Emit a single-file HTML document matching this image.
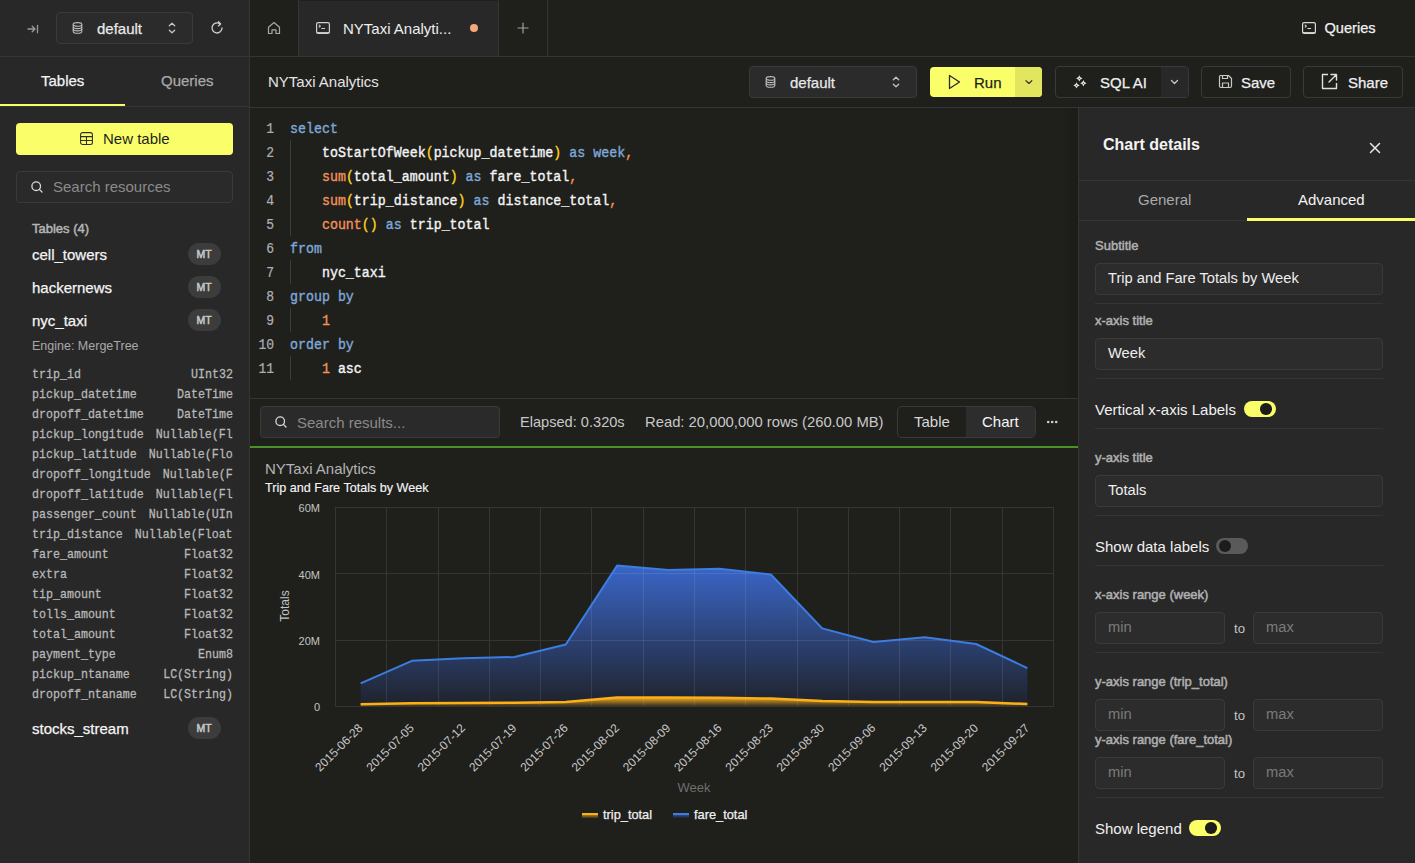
<!DOCTYPE html>
<html><head><meta charset="utf-8">
<style>
*{box-sizing:border-box;margin:0;padding:0}
html,body{width:1415px;height:863px;overflow:hidden;background:#1f1f1c;font-family:"Liberation Sans",sans-serif;color:#e6e6e6}
.abs{position:absolute}
svg{display:block}
.t{position:absolute;white-space:nowrap;line-height:1}
</style></head><body>
<div class="abs" style="left:0px;top:0px;width:249px;height:863px;background:#282828"></div>
<div class="abs" style="left:249px;top:0px;width:1px;height:863px;background:#353535"></div>
<div class="abs" style="left:0px;top:56px;width:249px;height:1px;background:#353535"></div>
<div class="abs" style="left:0px;top:106px;width:249px;height:1px;background:#353535"></div>
<div class="abs" style="left:0px;top:104px;width:125px;height:2px;background:#faff69"></div>
<svg class="abs" style="left:26.5px;top:23.5px;" width="12" height="10" viewBox="0 0 12 10"><path d="M1 5H8M5.2 2.2L8 5L5.2 7.8M10.5 1.3V8.7" stroke="#9a9a9a" stroke-width="1.3" fill="none" stroke-linecap="round" stroke-linejoin="round"/></svg>
<div class="abs" style="left:56px;top:12px;width:137px;height:32px;background:#2b2b2b;border:1px solid #3a3a3a;border-radius:4px"></div>
<svg class="abs" style="left:72px;top:22px;" width="11" height="12" viewBox="0 0 11 12"><g fill="none" stroke="#bdbdbd" stroke-width="1.1"><ellipse cx="5.5" cy="2.4" rx="4.3" ry="1.8"/><path d="M1.2 2.4V9.4C1.2 10.4 3.1 11.2 5.5 11.2S9.8 10.4 9.8 9.4V2.4"/><path d="M1.2 4.8C1.2 5.8 3.1 6.6 5.5 6.6S9.8 5.8 9.8 4.8M1.2 7.1C1.2 8.1 3.1 8.9 5.5 8.9S9.8 8.1 9.8 7.1"/></g></svg>
<div class="t" style="left:97px;top:21px;font-size:15px;color:#e8e8e8;font-weight:400;font-family:'Liberation Sans',sans-serif;-webkit-text-stroke:0.25px #e8e8e8;">default</div>
<svg class="abs" style="left:168px;top:22px;" width="8" height="12" viewBox="0 0 8 12"><path d="M1.3 3.8L4 1.2L6.7 3.8M1.3 8.2L4 10.8L6.7 8.2" stroke="#c8c8c8" stroke-width="1.2" fill="none" stroke-linecap="round" stroke-linejoin="round"/></svg>
<svg class="abs" style="left:210px;top:21px;" width="14" height="14" viewBox="0 0 14 14"><path d="M12 7A5 5 0 1 1 9.6 2.7" stroke="#d0d0d0" stroke-width="1.3" fill="none" stroke-linecap="round"/><path d="M8.5 0.8L10.6 2.9L8.4 4.9" stroke="#d0d0d0" stroke-width="1.3" fill="none" stroke-linecap="round" stroke-linejoin="round"/></svg>
<div class="t" style="left:41px;top:73px;font-size:15px;color:#f2f2f2;font-weight:400;font-family:'Liberation Sans',sans-serif;-webkit-text-stroke:0.25px #f2f2f2;">Tables</div>
<div class="t" style="left:161px;top:73px;font-size:15px;color:#a8a8a8;font-weight:400;font-family:'Liberation Sans',sans-serif;-webkit-text-stroke:0.25px #a8a8a8;">Queries</div>
<div class="abs" style="left:16px;top:123px;width:217px;height:32px;background:#faff69;border-radius:4px"></div>
<svg class="abs" style="left:80px;top:132px;" width="13" height="13" viewBox="0 0 13 13"><g fill="none" stroke="#2e2e22" stroke-width="1.05"><rect x="0.6" y="0.6" width="11.8" height="11.8" rx="2"/><path d="M0.6 4.6H12.4M0.6 8.5H12.4M6.5 4.6V12.4"/></g></svg>
<div class="t" style="left:103px;top:131px;font-size:15px;color:#1f1f1c;font-weight:400;font-family:'Liberation Sans',sans-serif;">New table</div>
<div class="abs" style="left:16px;top:171px;width:217px;height:32px;background:#2a2a2a;border:1px solid #3a3a3a;border-radius:4px"></div>
<svg class="abs" style="left:31px;top:181px;" width="12" height="12" viewBox="0 0 12 12"><circle cx="5.2" cy="5.2" r="4.3" stroke="#d8d8d8" stroke-width="1.3" fill="none"/><path d="M8.4 8.4L11 11" stroke="#d8d8d8" stroke-width="1.3" stroke-linecap="round"/></svg>
<div class="t" style="left:53px;top:179px;font-size:15px;color:#8a8a8a;font-weight:400;font-family:'Liberation Sans',sans-serif;">Search resources</div>
<div class="t" style="left:32px;top:221.5px;font-size:13px;color:#b4b4b4;font-weight:400;font-family:'Liberation Sans',sans-serif;-webkit-text-stroke:0.5px #b4b4b4;">Tables (4)</div>
<div class="t" style="left:32px;top:247px;font-size:15px;color:#f4f4f4;font-weight:400;font-family:'Liberation Sans',sans-serif;-webkit-text-stroke:0.25px #f4f4f4;">cell_towers</div>
<div class="abs" style="left:188px;top:243px;width:33px;height:22px;background:#3c3c3c;border-radius:11px"></div>
<div class="t" style="left:196.5px;top:249px;font-size:10.5px;color:#c8c8c8;font-weight:400;font-family:'Liberation Sans',sans-serif;-webkit-text-stroke:0.5px #c8c8c8;">MT</div>
<div class="t" style="left:32px;top:280px;font-size:15px;color:#f4f4f4;font-weight:400;font-family:'Liberation Sans',sans-serif;-webkit-text-stroke:0.25px #f4f4f4;">hackernews</div>
<div class="abs" style="left:188px;top:276px;width:33px;height:22px;background:#3c3c3c;border-radius:11px"></div>
<div class="t" style="left:196.5px;top:282px;font-size:10.5px;color:#c8c8c8;font-weight:400;font-family:'Liberation Sans',sans-serif;-webkit-text-stroke:0.5px #c8c8c8;">MT</div>
<div class="t" style="left:32px;top:313px;font-size:15px;color:#f4f4f4;font-weight:400;font-family:'Liberation Sans',sans-serif;-webkit-text-stroke:0.25px #f4f4f4;">nyc_taxi</div>
<div class="abs" style="left:188px;top:309px;width:33px;height:22px;background:#3c3c3c;border-radius:11px"></div>
<div class="t" style="left:196.5px;top:315px;font-size:10.5px;color:#c8c8c8;font-weight:400;font-family:'Liberation Sans',sans-serif;-webkit-text-stroke:0.5px #c8c8c8;">MT</div>
<div class="t" style="left:32px;top:340px;font-size:12.5px;color:#a8a8a8;font-weight:400;font-family:'Liberation Sans',sans-serif;">Engine: MergeTree</div>
<div class="abs" style="left:32px;top:366px;width:201px;height:16px;display:flex;font-family:'Liberation Mono',monospace;font-size:11.65px;line-height:16px;color:#b8b8b8;white-space:nowrap;transform:scaleY(1.17);-webkit-text-stroke:0.25px #b8b8b8"><span style="flex:none">trip_id</span><span style="flex:1;margin-left:12px;overflow:hidden;text-align:right">UInt32</span></div>
<div class="abs" style="left:32px;top:386px;width:201px;height:16px;display:flex;font-family:'Liberation Mono',monospace;font-size:11.65px;line-height:16px;color:#b8b8b8;white-space:nowrap;transform:scaleY(1.17);-webkit-text-stroke:0.25px #b8b8b8"><span style="flex:none">pickup_datetime</span><span style="flex:1;margin-left:12px;overflow:hidden;text-align:right">DateTime</span></div>
<div class="abs" style="left:32px;top:406px;width:201px;height:16px;display:flex;font-family:'Liberation Mono',monospace;font-size:11.65px;line-height:16px;color:#b8b8b8;white-space:nowrap;transform:scaleY(1.17);-webkit-text-stroke:0.25px #b8b8b8"><span style="flex:none">dropoff_datetime</span><span style="flex:1;margin-left:12px;overflow:hidden;text-align:right">DateTime</span></div>
<div class="abs" style="left:32px;top:426px;width:201px;height:16px;display:flex;font-family:'Liberation Mono',monospace;font-size:11.65px;line-height:16px;color:#b8b8b8;white-space:nowrap;transform:scaleY(1.17);-webkit-text-stroke:0.25px #b8b8b8"><span style="flex:none">pickup_longitude</span><span style="flex:1;margin-left:12px;overflow:hidden;text-align:right">Nullable(Float64)</span></div>
<div class="abs" style="left:32px;top:446px;width:201px;height:16px;display:flex;font-family:'Liberation Mono',monospace;font-size:11.65px;line-height:16px;color:#b8b8b8;white-space:nowrap;transform:scaleY(1.17);-webkit-text-stroke:0.25px #b8b8b8"><span style="flex:none">pickup_latitude</span><span style="flex:1;margin-left:12px;overflow:hidden;text-align:right">Nullable(Float64)</span></div>
<div class="abs" style="left:32px;top:466px;width:201px;height:16px;display:flex;font-family:'Liberation Mono',monospace;font-size:11.65px;line-height:16px;color:#b8b8b8;white-space:nowrap;transform:scaleY(1.17);-webkit-text-stroke:0.25px #b8b8b8"><span style="flex:none">dropoff_longitude</span><span style="flex:1;margin-left:12px;overflow:hidden;text-align:right">Nullable(Float64)</span></div>
<div class="abs" style="left:32px;top:486px;width:201px;height:16px;display:flex;font-family:'Liberation Mono',monospace;font-size:11.65px;line-height:16px;color:#b8b8b8;white-space:nowrap;transform:scaleY(1.17);-webkit-text-stroke:0.25px #b8b8b8"><span style="flex:none">dropoff_latitude</span><span style="flex:1;margin-left:12px;overflow:hidden;text-align:right">Nullable(Float64)</span></div>
<div class="abs" style="left:32px;top:506px;width:201px;height:16px;display:flex;font-family:'Liberation Mono',monospace;font-size:11.65px;line-height:16px;color:#b8b8b8;white-space:nowrap;transform:scaleY(1.17);-webkit-text-stroke:0.25px #b8b8b8"><span style="flex:none">passenger_count</span><span style="flex:1;margin-left:12px;overflow:hidden;text-align:right">Nullable(UInt8)</span></div>
<div class="abs" style="left:32px;top:526px;width:201px;height:16px;display:flex;font-family:'Liberation Mono',monospace;font-size:11.65px;line-height:16px;color:#b8b8b8;white-space:nowrap;transform:scaleY(1.17);-webkit-text-stroke:0.25px #b8b8b8"><span style="flex:none">trip_distance</span><span style="flex:1;margin-left:12px;overflow:hidden;text-align:right">Nullable(Float32)</span></div>
<div class="abs" style="left:32px;top:546px;width:201px;height:16px;display:flex;font-family:'Liberation Mono',monospace;font-size:11.65px;line-height:16px;color:#b8b8b8;white-space:nowrap;transform:scaleY(1.17);-webkit-text-stroke:0.25px #b8b8b8"><span style="flex:none">fare_amount</span><span style="flex:1;margin-left:12px;overflow:hidden;text-align:right">Float32</span></div>
<div class="abs" style="left:32px;top:566px;width:201px;height:16px;display:flex;font-family:'Liberation Mono',monospace;font-size:11.65px;line-height:16px;color:#b8b8b8;white-space:nowrap;transform:scaleY(1.17);-webkit-text-stroke:0.25px #b8b8b8"><span style="flex:none">extra</span><span style="flex:1;margin-left:12px;overflow:hidden;text-align:right">Float32</span></div>
<div class="abs" style="left:32px;top:586px;width:201px;height:16px;display:flex;font-family:'Liberation Mono',monospace;font-size:11.65px;line-height:16px;color:#b8b8b8;white-space:nowrap;transform:scaleY(1.17);-webkit-text-stroke:0.25px #b8b8b8"><span style="flex:none">tip_amount</span><span style="flex:1;margin-left:12px;overflow:hidden;text-align:right">Float32</span></div>
<div class="abs" style="left:32px;top:606px;width:201px;height:16px;display:flex;font-family:'Liberation Mono',monospace;font-size:11.65px;line-height:16px;color:#b8b8b8;white-space:nowrap;transform:scaleY(1.17);-webkit-text-stroke:0.25px #b8b8b8"><span style="flex:none">tolls_amount</span><span style="flex:1;margin-left:12px;overflow:hidden;text-align:right">Float32</span></div>
<div class="abs" style="left:32px;top:626px;width:201px;height:16px;display:flex;font-family:'Liberation Mono',monospace;font-size:11.65px;line-height:16px;color:#b8b8b8;white-space:nowrap;transform:scaleY(1.17);-webkit-text-stroke:0.25px #b8b8b8"><span style="flex:none">total_amount</span><span style="flex:1;margin-left:12px;overflow:hidden;text-align:right">Float32</span></div>
<div class="abs" style="left:32px;top:646px;width:201px;height:16px;display:flex;font-family:'Liberation Mono',monospace;font-size:11.65px;line-height:16px;color:#b8b8b8;white-space:nowrap;transform:scaleY(1.17);-webkit-text-stroke:0.25px #b8b8b8"><span style="flex:none">payment_type</span><span style="flex:1;margin-left:12px;overflow:hidden;text-align:right">Enum8</span></div>
<div class="abs" style="left:32px;top:666px;width:201px;height:16px;display:flex;font-family:'Liberation Mono',monospace;font-size:11.65px;line-height:16px;color:#b8b8b8;white-space:nowrap;transform:scaleY(1.17);-webkit-text-stroke:0.25px #b8b8b8"><span style="flex:none">pickup_ntaname</span><span style="flex:1;margin-left:12px;overflow:hidden;text-align:right">LC(String)</span></div>
<div class="abs" style="left:32px;top:686px;width:201px;height:16px;display:flex;font-family:'Liberation Mono',monospace;font-size:11.65px;line-height:16px;color:#b8b8b8;white-space:nowrap;transform:scaleY(1.17);-webkit-text-stroke:0.25px #b8b8b8"><span style="flex:none">dropoff_ntaname</span><span style="flex:1;margin-left:12px;overflow:hidden;text-align:right">LC(String)</span></div>
<div class="t" style="left:32px;top:721px;font-size:15px;color:#f4f4f4;font-weight:400;font-family:'Liberation Sans',sans-serif;-webkit-text-stroke:0.25px #f4f4f4;">stocks_stream</div>
<div class="abs" style="left:188px;top:717px;width:33px;height:22px;background:#3c3c3c;border-radius:11px"></div>
<div class="t" style="left:196.5px;top:723px;font-size:10.5px;color:#c8c8c8;font-weight:400;font-family:'Liberation Sans',sans-serif;-webkit-text-stroke:0.5px #c8c8c8;">MT</div>
<div class="abs" style="left:250px;top:56px;width:1165px;height:1px;background:#353535"></div>
<div class="abs" style="left:298px;top:0px;width:1px;height:56px;background:#353535"></div>
<div class="abs" style="left:299px;top:1px;width:199px;height:55px;background:#282828"></div>
<div class="abs" style="left:498px;top:0px;width:1px;height:56px;background:#353535"></div>
<div class="abs" style="left:547px;top:0px;width:1px;height:56px;background:#353535"></div>
<svg class="abs" style="left:267px;top:21px;" width="14" height="14" viewBox="0 0 14 14"><path d="M1.5 6.2L7 1.5L12.5 6.2V12.5H9V8.8H5V12.5H1.5Z" stroke="#a8a8a8" stroke-width="1.2" fill="none" stroke-linejoin="round"/></svg>
<svg class="abs" style="left:316px;top:22px;" width="14" height="12" viewBox="0 0 14 12"><rect x="0.6" y="0.6" width="12.8" height="10.8" rx="1.5" stroke="#d0d0d0" stroke-width="1.2" fill="none"/><path d="M1 10.6H13" stroke="#d0d0d0" stroke-width="1" fill="none"/><path d="M3.2 3.2L4.4 4.2L3.2 5.2M5.8 6.5H8.6" stroke="#d0d0d0" stroke-width="1.1" fill="none" stroke-linecap="round" stroke-linejoin="round"/></svg>
<div class="t" style="left:343px;top:21px;font-size:15px;color:#eeeeee;font-weight:400;font-family:'Liberation Sans',sans-serif;">NYTaxi Analyti...</div>
<div class="abs" style="left:470px;top:24px;width:8.3px;height:8.3px;border-radius:50%;background:#f5a97a"></div>
<svg class="abs" style="left:517px;top:22px;" width="12" height="12" viewBox="0 0 12 12"><path d="M6 1V11M1 6H11" stroke="#a0a0a0" stroke-width="1.2" stroke-linecap="round"/></svg>
<svg class="abs" style="left:1302px;top:22px;" width="14" height="12" viewBox="0 0 14 12"><rect x="0.6" y="0.6" width="12.8" height="10.8" rx="1.5" stroke="#d8d8d8" stroke-width="1.2" fill="none"/><path d="M1 10.6H13" stroke="#d8d8d8" stroke-width="1" fill="none"/><path d="M3.2 3.2L4.4 4.2L3.2 5.2M5.8 6.5H8.6" stroke="#d8d8d8" stroke-width="1.1" fill="none" stroke-linecap="round" stroke-linejoin="round"/></svg>
<div class="t" style="left:1324.5px;top:21px;font-size:14.6px;color:#f0f0f0;font-weight:400;font-family:'Liberation Sans',sans-serif;-webkit-text-stroke:0.25px #f0f0f0;">Queries</div>
<div class="abs" style="left:250px;top:107px;width:1165px;height:1px;background:#353535"></div>
<div class="t" style="left:268px;top:74px;font-size:15px;color:#e4e4e4;font-weight:400;font-family:'Liberation Sans',sans-serif;">NYTaxi Analytics</div>
<div class="abs" style="left:749px;top:66px;width:168px;height:32px;background:#2b2b2b;border:1px solid #3a3a3a;border-radius:4px"></div>
<svg class="abs" style="left:765px;top:76px;" width="11" height="12" viewBox="0 0 11 12"><g fill="none" stroke="#bdbdbd" stroke-width="1.1"><ellipse cx="5.5" cy="2.4" rx="4.3" ry="1.8"/><path d="M1.2 2.4V9.4C1.2 10.4 3.1 11.2 5.5 11.2S9.8 10.4 9.8 9.4V2.4"/><path d="M1.2 4.8C1.2 5.8 3.1 6.6 5.5 6.6S9.8 5.8 9.8 4.8M1.2 7.1C1.2 8.1 3.1 8.9 5.5 8.9S9.8 8.1 9.8 7.1"/></g></svg>
<div class="t" style="left:790px;top:75px;font-size:15px;color:#e8e8e8;font-weight:400;font-family:'Liberation Sans',sans-serif;-webkit-text-stroke:0.25px #e8e8e8;">default</div>
<svg class="abs" style="left:892px;top:76px;" width="8" height="12" viewBox="0 0 8 12"><path d="M1.3 3.8L4 1.2L6.7 3.8M1.3 8.2L4 10.8L6.7 8.2" stroke="#c8c8c8" stroke-width="1.2" fill="none" stroke-linecap="round" stroke-linejoin="round"/></svg>
<div class="abs" style="left:930px;top:67px;width:112px;height:30px;background:#faff69;border-radius:4px;overflow:hidden"></div>
<div class="abs" style="left:1015px;top:67px;width:27px;height:30px;background:#e2e65e;border-radius:0 4px 4px 0"></div>
<svg class="abs" style="left:948px;top:74px;" width="13" height="16" viewBox="0 0 13 16"><path d="M1.5 1.5L11.5 8L1.5 14.5Z" stroke="#2a2a2a" stroke-width="1.3" fill="none" stroke-linejoin="round"/></svg>
<div class="t" style="left:974px;top:75px;font-size:15px;color:#1f1f1c;font-weight:400;font-family:'Liberation Sans',sans-serif;-webkit-text-stroke:0.25px #1f1f1c;">Run</div>
<svg class="abs" style="left:1024px;top:79px;" width="9" height="6" viewBox="0 0 9 6"><path d="M2 1.8L4.9 4.4L7.8 1.8" stroke="#3a3a2a" stroke-width="1.3" fill="none" stroke-linecap="round" stroke-linejoin="round"/></svg>
<div class="abs" style="left:1055px;top:66px;width:134px;height:32px;border:1px solid #3a3a3a;border-radius:4px"></div>
<div class="abs" style="left:1161px;top:67px;width:27px;height:30px;background:#282828;border-radius:0 3px 3px 0"></div>
<svg class="abs" style="left:1070px;top:72px;" width="18" height="18" viewBox="0 0 18 18"><path d="M9.3 3.2Q9.9 5.800000000000001 12.5 6.4Q9.9 7.0 9.3 9.600000000000001Q8.700000000000001 7.0 6.1000000000000005 6.4Q8.700000000000001 5.800000000000001 9.3 3.2Z" fill="#e0e0e0"/><circle cx="9.3" cy="6.4" r="0.5" fill="#1f1f1c"/><path d="M13.4 7.999999999999999Q14.0 10.6 16.6 11.2Q14.0 11.799999999999999 13.4 14.399999999999999Q12.8 11.799999999999999 10.2 11.2Q12.8 10.6 13.4 7.999999999999999Z" fill="#e0e0e0"/><circle cx="13.4" cy="11.2" r="0.5" fill="#1f1f1c"/><path d="M6.5 10.2Q7.1 12.8 9.7 13.4Q7.1 14.0 6.5 16.6Q5.9 14.0 3.3 13.4Q5.9 12.8 6.5 10.2Z" fill="#e0e0e0"/><circle cx="6.5" cy="13.4" r="0.5" fill="#1f1f1c"/></svg>
<div class="t" style="left:1100px;top:75px;font-size:15px;color:#f0f0f0;font-weight:400;font-family:'Liberation Sans',sans-serif;-webkit-text-stroke:0.25px #f0f0f0;">SQL AI</div>
<svg class="abs" style="left:1170px;top:79px;" width="9" height="6" viewBox="0 0 9 6"><path d="M1.5 1.5L4.5 4.5L7.5 1.5" stroke="#c8c8c8" stroke-width="1.3" fill="none" stroke-linecap="round" stroke-linejoin="round"/></svg>
<div class="abs" style="left:1201px;top:66px;width:90px;height:32px;border:1px solid #3a3a3a;border-radius:4px"></div>
<svg class="abs" style="left:1218px;top:74px;" width="15" height="15" viewBox="0 0 15 15"><path d="M2.5 1.5H10.5L13.5 4.5V12C13.5 12.8 12.8 13.5 12 13.5H3C2.2 13.5 1.5 12.8 1.5 12V2.5C1.5 2 2 1.5 2.5 1.5Z" stroke="#c8c8c8" stroke-width="1.2" fill="none" stroke-linejoin="round"/><path d="M4.5 1.5V4.5H9.5V1.5M4.5 13.5V9H10.5V13.5" stroke="#c8c8c8" stroke-width="1.2" fill="none" stroke-linejoin="round"/></svg>
<div class="t" style="left:1241px;top:75px;font-size:15px;color:#f0f0f0;font-weight:400;font-family:'Liberation Sans',sans-serif;-webkit-text-stroke:0.25px #f0f0f0;">Save</div>
<div class="abs" style="left:1303px;top:66px;width:100px;height:32px;border:1px solid #3a3a3a;border-radius:4px"></div>
<svg class="abs" style="left:1321px;top:73px;" width="17" height="17" viewBox="0 0 17 17"><path d="M7 1.5H1.5V15.5H15.5V10" stroke="#e0e0e0" stroke-width="1.4" fill="none" stroke-linejoin="round"/><path d="M10 1.5H15.5V7M15.5 1.5L8 9" stroke="#e0e0e0" stroke-width="1.4" fill="none" stroke-linecap="round" stroke-linejoin="round"/></svg>
<div class="t" style="left:1348px;top:75px;font-size:15px;color:#f0f0f0;font-weight:400;font-family:'Liberation Sans',sans-serif;-webkit-text-stroke:0.25px #f0f0f0;">Share</div>
<div class="t" style="left:250px;width:24px;text-align:right;top:121.5px;font-family:'Liberation Mono',monospace;font-size:13px;line-height:16px;color:#b0b0b0;transform:scaleY(1.15);-webkit-text-stroke:0.2px #b0b0b0">1</div>
<div class="t" style="left:290px;top:121.5px;font-family:'Liberation Mono',monospace;font-size:13.3px;line-height:16px;transform:scaleY(1.13);transform-origin:0 50%;-webkit-text-stroke:0.35px currentColor"><span style="color:#7fa8d6">select</span></div>
<div class="t" style="left:250px;width:24px;text-align:right;top:145.5px;font-family:'Liberation Mono',monospace;font-size:13px;line-height:16px;color:#b0b0b0;transform:scaleY(1.15);-webkit-text-stroke:0.2px #b0b0b0">2</div>
<div class="t" style="left:290px;top:145.5px;font-family:'Liberation Mono',monospace;font-size:13.3px;line-height:16px;transform:scaleY(1.13);transform-origin:0 50%;-webkit-text-stroke:0.35px currentColor"><span style="color:#f4f4f4">&nbsp;&nbsp;&nbsp;&nbsp;</span><span style="color:#f4f4f4">toStartOfWeek</span><span style="color:#f9d423">(</span><span style="color:#f4f4f4">pickup_datetime</span><span style="color:#f9d423">)</span><span style="color:#7fa8d6">&nbsp;as&nbsp;</span><span style="color:#7fa8d6">week</span><span style="color:#f0925a">,</span></div>
<div class="t" style="left:250px;width:24px;text-align:right;top:169.5px;font-family:'Liberation Mono',monospace;font-size:13px;line-height:16px;color:#b0b0b0;transform:scaleY(1.15);-webkit-text-stroke:0.2px #b0b0b0">3</div>
<div class="t" style="left:290px;top:169.5px;font-family:'Liberation Mono',monospace;font-size:13.3px;line-height:16px;transform:scaleY(1.13);transform-origin:0 50%;-webkit-text-stroke:0.35px currentColor"><span style="color:#f4f4f4">&nbsp;&nbsp;&nbsp;&nbsp;</span><span style="color:#f0925a">sum</span><span style="color:#f9d423">(</span><span style="color:#f4f4f4">total_amount</span><span style="color:#f9d423">)</span><span style="color:#7fa8d6">&nbsp;as&nbsp;</span><span style="color:#f4f4f4">fare_total</span><span style="color:#f0925a">,</span></div>
<div class="t" style="left:250px;width:24px;text-align:right;top:193.5px;font-family:'Liberation Mono',monospace;font-size:13px;line-height:16px;color:#b0b0b0;transform:scaleY(1.15);-webkit-text-stroke:0.2px #b0b0b0">4</div>
<div class="t" style="left:290px;top:193.5px;font-family:'Liberation Mono',monospace;font-size:13.3px;line-height:16px;transform:scaleY(1.13);transform-origin:0 50%;-webkit-text-stroke:0.35px currentColor"><span style="color:#f4f4f4">&nbsp;&nbsp;&nbsp;&nbsp;</span><span style="color:#f0925a">sum</span><span style="color:#f9d423">(</span><span style="color:#f4f4f4">trip_distance</span><span style="color:#f9d423">)</span><span style="color:#7fa8d6">&nbsp;as&nbsp;</span><span style="color:#f4f4f4">distance_total</span><span style="color:#f0925a">,</span></div>
<div class="t" style="left:250px;width:24px;text-align:right;top:217.5px;font-family:'Liberation Mono',monospace;font-size:13px;line-height:16px;color:#b0b0b0;transform:scaleY(1.15);-webkit-text-stroke:0.2px #b0b0b0">5</div>
<div class="t" style="left:290px;top:217.5px;font-family:'Liberation Mono',monospace;font-size:13.3px;line-height:16px;transform:scaleY(1.13);transform-origin:0 50%;-webkit-text-stroke:0.35px currentColor"><span style="color:#f4f4f4">&nbsp;&nbsp;&nbsp;&nbsp;</span><span style="color:#f0925a">count</span><span style="color:#f9d423">()</span><span style="color:#7fa8d6">&nbsp;as&nbsp;</span><span style="color:#f4f4f4">trip_total</span></div>
<div class="t" style="left:250px;width:24px;text-align:right;top:241.5px;font-family:'Liberation Mono',monospace;font-size:13px;line-height:16px;color:#b0b0b0;transform:scaleY(1.15);-webkit-text-stroke:0.2px #b0b0b0">6</div>
<div class="t" style="left:290px;top:241.5px;font-family:'Liberation Mono',monospace;font-size:13.3px;line-height:16px;transform:scaleY(1.13);transform-origin:0 50%;-webkit-text-stroke:0.35px currentColor"><span style="color:#7fa8d6">from</span></div>
<div class="t" style="left:250px;width:24px;text-align:right;top:265.5px;font-family:'Liberation Mono',monospace;font-size:13px;line-height:16px;color:#b0b0b0;transform:scaleY(1.15);-webkit-text-stroke:0.2px #b0b0b0">7</div>
<div class="t" style="left:290px;top:265.5px;font-family:'Liberation Mono',monospace;font-size:13.3px;line-height:16px;transform:scaleY(1.13);transform-origin:0 50%;-webkit-text-stroke:0.35px currentColor"><span style="color:#f4f4f4">&nbsp;&nbsp;&nbsp;&nbsp;</span><span style="color:#f4f4f4">nyc_taxi</span></div>
<div class="t" style="left:250px;width:24px;text-align:right;top:289.5px;font-family:'Liberation Mono',monospace;font-size:13px;line-height:16px;color:#b0b0b0;transform:scaleY(1.15);-webkit-text-stroke:0.2px #b0b0b0">8</div>
<div class="t" style="left:290px;top:289.5px;font-family:'Liberation Mono',monospace;font-size:13.3px;line-height:16px;transform:scaleY(1.13);transform-origin:0 50%;-webkit-text-stroke:0.35px currentColor"><span style="color:#7fa8d6">group&nbsp;by</span></div>
<div class="t" style="left:250px;width:24px;text-align:right;top:313.5px;font-family:'Liberation Mono',monospace;font-size:13px;line-height:16px;color:#b0b0b0;transform:scaleY(1.15);-webkit-text-stroke:0.2px #b0b0b0">9</div>
<div class="t" style="left:290px;top:313.5px;font-family:'Liberation Mono',monospace;font-size:13.3px;line-height:16px;transform:scaleY(1.13);transform-origin:0 50%;-webkit-text-stroke:0.35px currentColor"><span style="color:#f4f4f4">&nbsp;&nbsp;&nbsp;&nbsp;</span><span style="color:#f0925a">1</span></div>
<div class="t" style="left:250px;width:24px;text-align:right;top:337.5px;font-family:'Liberation Mono',monospace;font-size:13px;line-height:16px;color:#b0b0b0;transform:scaleY(1.15);-webkit-text-stroke:0.2px #b0b0b0">10</div>
<div class="t" style="left:290px;top:337.5px;font-family:'Liberation Mono',monospace;font-size:13.3px;line-height:16px;transform:scaleY(1.13);transform-origin:0 50%;-webkit-text-stroke:0.35px currentColor"><span style="color:#7fa8d6">order&nbsp;by</span></div>
<div class="t" style="left:250px;width:24px;text-align:right;top:361.5px;font-family:'Liberation Mono',monospace;font-size:13px;line-height:16px;color:#b0b0b0;transform:scaleY(1.15);-webkit-text-stroke:0.2px #b0b0b0">11</div>
<div class="t" style="left:290px;top:361.5px;font-family:'Liberation Mono',monospace;font-size:13.3px;line-height:16px;transform:scaleY(1.13);transform-origin:0 50%;-webkit-text-stroke:0.35px currentColor"><span style="color:#f4f4f4">&nbsp;&nbsp;&nbsp;&nbsp;</span><span style="color:#f0925a">1</span><span style="color:#f4f4f4">&nbsp;asc</span></div>
<div class="abs" style="left:290px;top:140px;width:1px;height:0px;"></div>
<div class="abs" style="left:290px;top:260px;width:1px;height:0px;"></div>
<div class="abs" style="left:290px;top:308px;width:1px;height:0px;"></div>
<div class="abs" style="left:290px;top:356px;width:1px;height:0px;"></div>
<div class="abs" style="left:290px;top:140px;width:1px;height:96px;background:#3c3c3c"></div>
<div class="abs" style="left:290px;top:260px;width:1px;height:24px;background:#3c3c3c"></div>
<div class="abs" style="left:290px;top:308px;width:1px;height:24px;background:#3c3c3c"></div>
<div class="abs" style="left:290px;top:356px;width:1px;height:24px;background:#3c3c3c"></div>
<div class="abs" style="left:250px;top:398px;width:828px;height:1px;background:#353535"></div>
<div class="abs" style="left:260px;top:406px;width:240px;height:32px;background:#2a2a2a;border:1px solid #3a3a3a;border-radius:4px"></div>
<svg class="abs" style="left:275px;top:416px;" width="12" height="12" viewBox="0 0 12 12"><circle cx="5.2" cy="5.2" r="4.3" stroke="#d8d8d8" stroke-width="1.3" fill="none"/><path d="M8.4 8.4L11 11" stroke="#d8d8d8" stroke-width="1.3" stroke-linecap="round"/></svg>
<div class="t" style="left:297px;top:415px;font-size:15px;color:#8a8a8a;font-weight:400;font-family:'Liberation Sans',sans-serif;">Search results...</div>
<div class="t" style="left:520px;top:415px;font-size:14.6px;color:#c8c8c8;font-weight:400;font-family:'Liberation Sans',sans-serif;">Elapsed: 0.320s</div>
<div class="t" style="left:645px;top:415px;font-size:14.8px;color:#c8c8c8;font-weight:400;font-family:'Liberation Sans',sans-serif;">Read: 20,000,000 rows (260.00 MB)</div>
<div class="abs" style="left:897px;top:406px;width:139px;height:32px;border:1px solid #3a3a3a;border-radius:5px"></div>
<div class="abs" style="left:966px;top:407px;width:69px;height:30px;background:#2d2d2d;border-radius:0 4px 4px 0"></div>
<div class="t" style="left:914px;top:414px;font-size:15px;color:#d8d8d8;font-weight:400;font-family:'Liberation Sans',sans-serif;">Table</div>
<div class="t" style="left:982px;top:414px;font-size:15px;color:#f6f6f6;font-weight:400;font-family:'Liberation Sans',sans-serif;">Chart</div>
<svg class="abs" style="left:1046px;top:420px;" width="12" height="4" viewBox="0 0 12 4"><circle cx="2.2" cy="2" r="1.3" fill="#d0d0d0"/><circle cx="6.2" cy="2" r="1.3" fill="#d0d0d0"/><circle cx="10.2" cy="2" r="1.3" fill="#d0d0d0"/></svg>
<div class="abs" style="left:250px;top:446px;width:828px;height:2px;background:#4a9328"></div>
<div class="t" style="left:265px;top:461px;font-size:15px;color:#b4b4b4;font-weight:400;font-family:'Liberation Sans',sans-serif;">NYTaxi Analytics</div>
<div class="t" style="left:265px;top:482px;font-size:12.6px;color:#f4f4f4;font-weight:400;font-family:'Liberation Sans',sans-serif;-webkit-text-stroke:0.25px #f4f4f4;-webkit-text-stroke:0.15px #f4f4f4">Trip and Fare Totals by Week</div>
<svg class="abs" style="left:0;top:0;font-family:'Liberation Sans',sans-serif" width="1415" height="863"><defs><linearGradient id="gb" x1="0" y1="0" x2="0" y2="1"><stop offset="0" stop-color="#3a66c8"/><stop offset="1" stop-color="#1f222a"/></linearGradient><linearGradient id="go" x1="0" y1="0" x2="0" y2="1"><stop offset="0" stop-color="#f0a820"/><stop offset="1" stop-color="#3a3220"/></linearGradient></defs><line x1="335.5" y1="507" x2="335.5" y2="706" stroke="#353533" stroke-width="1"/><line x1="386.5" y1="507" x2="386.5" y2="706" stroke="#353533" stroke-width="1"/><line x1="438.5" y1="507" x2="438.5" y2="706" stroke="#353533" stroke-width="1"/><line x1="489.5" y1="507" x2="489.5" y2="706" stroke="#353533" stroke-width="1"/><line x1="540.5" y1="507" x2="540.5" y2="706" stroke="#353533" stroke-width="1"/><line x1="591.5" y1="507" x2="591.5" y2="706" stroke="#353533" stroke-width="1"/><line x1="643.5" y1="507" x2="643.5" y2="706" stroke="#353533" stroke-width="1"/><line x1="694.5" y1="507" x2="694.5" y2="706" stroke="#353533" stroke-width="1"/><line x1="745.5" y1="507" x2="745.5" y2="706" stroke="#353533" stroke-width="1"/><line x1="797.5" y1="507" x2="797.5" y2="706" stroke="#353533" stroke-width="1"/><line x1="848.5" y1="507" x2="848.5" y2="706" stroke="#353533" stroke-width="1"/><line x1="899.5" y1="507" x2="899.5" y2="706" stroke="#353533" stroke-width="1"/><line x1="950.5" y1="507" x2="950.5" y2="706" stroke="#353533" stroke-width="1"/><line x1="1002.5" y1="507" x2="1002.5" y2="706" stroke="#353533" stroke-width="1"/><line x1="1053.5" y1="507" x2="1053.5" y2="706" stroke="#353533" stroke-width="1"/><line x1="335" y1="507.5" x2="1054" y2="507.5" stroke="#353533" stroke-width="1"/><line x1="335" y1="573.5" x2="1054" y2="573.5" stroke="#353533" stroke-width="1"/><line x1="335" y1="640.5" x2="1054" y2="640.5" stroke="#353533" stroke-width="1"/><line x1="335" y1="706.5" x2="1054" y2="706.5" stroke="#353533" stroke-width="1"/><polygon points="360.6,706 360.6,683.3 411.9,660.8 463.2,658.2 514.5,657.0 565.8,644.5 617.1,565.6 668.4,570.0 719.6,568.8 770.9,574.5 822.2,628.4 873.5,642.0 924.8,637.3 976.1,644.0 1027.4,668.1 1027.4,706" fill="url(#gb)"/><polygon points="360.6,706 360.6,704.3 411.9,703.3 463.2,702.9 514.5,702.7 565.8,702.1 617.1,697.6 668.4,697.6 719.6,697.8 770.9,698.5 822.2,701.0 873.5,702.0 924.8,702.0 976.1,702.0 1027.4,704.0 1027.4,706" fill="url(#go)"/><clipPath id="cb"><polygon points="360.6,706 360.6,683.3 411.9,660.8 463.2,658.2 514.5,657.0 565.8,644.5 617.1,565.6 668.4,570.0 719.6,568.8 770.9,574.5 822.2,628.4 873.5,642.0 924.8,637.3 976.1,644.0 1027.4,668.1 1027.4,706"/></clipPath><g clip-path="url(#cb)"><line x1="386.5" y1="507" x2="386.5" y2="706" stroke="#ffffff" stroke-opacity="0.09" stroke-width="1"/><line x1="438.5" y1="507" x2="438.5" y2="706" stroke="#ffffff" stroke-opacity="0.09" stroke-width="1"/><line x1="489.5" y1="507" x2="489.5" y2="706" stroke="#ffffff" stroke-opacity="0.09" stroke-width="1"/><line x1="540.5" y1="507" x2="540.5" y2="706" stroke="#ffffff" stroke-opacity="0.09" stroke-width="1"/><line x1="591.5" y1="507" x2="591.5" y2="706" stroke="#ffffff" stroke-opacity="0.09" stroke-width="1"/><line x1="643.5" y1="507" x2="643.5" y2="706" stroke="#ffffff" stroke-opacity="0.09" stroke-width="1"/><line x1="694.5" y1="507" x2="694.5" y2="706" stroke="#ffffff" stroke-opacity="0.09" stroke-width="1"/><line x1="745.5" y1="507" x2="745.5" y2="706" stroke="#ffffff" stroke-opacity="0.09" stroke-width="1"/><line x1="797.5" y1="507" x2="797.5" y2="706" stroke="#ffffff" stroke-opacity="0.09" stroke-width="1"/><line x1="848.5" y1="507" x2="848.5" y2="706" stroke="#ffffff" stroke-opacity="0.09" stroke-width="1"/><line x1="899.5" y1="507" x2="899.5" y2="706" stroke="#ffffff" stroke-opacity="0.09" stroke-width="1"/><line x1="950.5" y1="507" x2="950.5" y2="706" stroke="#ffffff" stroke-opacity="0.09" stroke-width="1"/><line x1="1002.5" y1="507" x2="1002.5" y2="706" stroke="#ffffff" stroke-opacity="0.09" stroke-width="1"/><line x1="335" y1="573.5" x2="1054" y2="573.5" stroke="#ffffff" stroke-opacity="0.09" stroke-width="1"/><line x1="335" y1="640.5" x2="1054" y2="640.5" stroke="#ffffff" stroke-opacity="0.09" stroke-width="1"/></g><polyline points="360.6,683.3 411.9,660.8 463.2,658.2 514.5,657.0 565.8,644.5 617.1,565.6 668.4,570.0 719.6,568.8 770.9,574.5 822.2,628.4 873.5,642.0 924.8,637.3 976.1,644.0 1027.4,668.1" fill="none" stroke="#3b7de0" stroke-width="2" stroke-linejoin="round"/><polyline points="360.6,704.3 411.9,703.3 463.2,702.9 514.5,702.7 565.8,702.1 617.1,697.6 668.4,697.6 719.6,697.8 770.9,698.5 822.2,701.0 873.5,702.0 924.8,702.0 976.1,702.0 1027.4,704.0" fill="none" stroke="#fbb016" stroke-width="2.5" stroke-linejoin="round"/><text x="320" y="512.2" text-anchor="end" font-size="11" fill="#c4c4c4">60M</text><text x="320" y="578.5" text-anchor="end" font-size="11" fill="#c4c4c4">40M</text><text x="320" y="644.9" text-anchor="end" font-size="11" fill="#c4c4c4">20M</text><text x="320" y="711.2" text-anchor="end" font-size="11" fill="#c4c4c4">0</text><text transform="translate(289,606) rotate(-90)" text-anchor="middle" font-size="12" fill="#c4c4c4">Totals</text><text transform="translate(360.6,726) rotate(-45)" text-anchor="end" font-size="12" fill="#c8c8c8" dominant-baseline="central">2015-06-28</text><text transform="translate(411.9,726) rotate(-45)" text-anchor="end" font-size="12" fill="#c8c8c8" dominant-baseline="central">2015-07-05</text><text transform="translate(463.2,726) rotate(-45)" text-anchor="end" font-size="12" fill="#c8c8c8" dominant-baseline="central">2015-07-12</text><text transform="translate(514.5,726) rotate(-45)" text-anchor="end" font-size="12" fill="#c8c8c8" dominant-baseline="central">2015-07-19</text><text transform="translate(565.8,726) rotate(-45)" text-anchor="end" font-size="12" fill="#c8c8c8" dominant-baseline="central">2015-07-26</text><text transform="translate(617.1,726) rotate(-45)" text-anchor="end" font-size="12" fill="#c8c8c8" dominant-baseline="central">2015-08-02</text><text transform="translate(668.4,726) rotate(-45)" text-anchor="end" font-size="12" fill="#c8c8c8" dominant-baseline="central">2015-08-09</text><text transform="translate(719.6,726) rotate(-45)" text-anchor="end" font-size="12" fill="#c8c8c8" dominant-baseline="central">2015-08-16</text><text transform="translate(770.9,726) rotate(-45)" text-anchor="end" font-size="12" fill="#c8c8c8" dominant-baseline="central">2015-08-23</text><text transform="translate(822.2,726) rotate(-45)" text-anchor="end" font-size="12" fill="#c8c8c8" dominant-baseline="central">2015-08-30</text><text transform="translate(873.5,726) rotate(-45)" text-anchor="end" font-size="12" fill="#c8c8c8" dominant-baseline="central">2015-09-06</text><text transform="translate(924.8,726) rotate(-45)" text-anchor="end" font-size="12" fill="#c8c8c8" dominant-baseline="central">2015-09-13</text><text transform="translate(976.1,726) rotate(-45)" text-anchor="end" font-size="12" fill="#c8c8c8" dominant-baseline="central">2015-09-20</text><text transform="translate(1027.4,726) rotate(-45)" text-anchor="end" font-size="12" fill="#c8c8c8" dominant-baseline="central">2015-09-27</text><text x="694" y="792" text-anchor="middle" font-size="13" fill="#6e6e6e">Week</text><rect x="582" y="813" width="16" height="5" fill="url(#go)"/><rect x="582" y="813" width="16" height="2" fill="#fbb016"/><text x="603" y="819" font-size="12.8" fill="#f0f0f0" stroke="#f0f0f0" stroke-width="0.25">trip_total</text><rect x="673" y="813" width="16" height="5" fill="url(#gb)"/><rect x="673" y="813" width="16" height="2" fill="#3b7de0"/><text x="694" y="819" font-size="12.8" fill="#f0f0f0" stroke="#f0f0f0" stroke-width="0.25">fare_total</text></svg>
<div class="abs" style="left:1060px;top:108px;width:18px;height:290px;background:linear-gradient(to right,rgba(0,0,0,0),rgba(0,0,0,0.13))"></div>
<div class="abs" style="left:1078px;top:108px;width:337px;height:755px;background:#282828"></div>
<div class="abs" style="left:1078px;top:108px;width:1px;height:755px;background:#353535"></div>
<div class="t" style="left:1103px;top:137px;font-size:16px;color:#f4f4f4;font-weight:700;font-family:'Liberation Sans',sans-serif;">Chart details</div>
<svg class="abs" style="left:1369px;top:142px;" width="12" height="12" viewBox="0 0 12 12"><path d="M1.5 1.5L10.5 10.5M10.5 1.5L1.5 10.5" stroke="#e8e8e8" stroke-width="1.5" stroke-linecap="round"/></svg>
<div class="abs" style="left:1079px;top:180px;width:336px;height:1px;background:#353535"></div>
<div class="t" style="left:1138px;top:192px;font-size:15px;color:#a8a8a8;font-weight:400;font-family:'Liberation Sans',sans-serif;">General</div>
<div class="t" style="left:1298px;top:192px;font-size:15px;color:#f4f4f4;font-weight:400;font-family:'Liberation Sans',sans-serif;">Advanced</div>
<div class="abs" style="left:1079px;top:220px;width:336px;height:1px;background:#353535"></div>
<div class="abs" style="left:1247px;top:218px;width:168px;height:2.5px;background:#faff69"></div>
<div class="t" style="left:1095px;top:239px;font-size:13px;color:#b0b0b0;font-weight:400;font-family:'Liberation Sans',sans-serif;-webkit-text-stroke:0.5px #b0b0b0;">Subtitle</div>
<div class="abs" style="left:1095px;top:263px;width:288px;height:32px;background:#2c2c2c;border:1px solid #3a3a3a;border-radius:4px"></div>
<div class="t" style="left:1108px;top:271px;font-size:14.7px;color:#eeeeee;font-weight:400;font-family:'Liberation Sans',sans-serif;">Trip and Fare Totals by Week</div>
<div class="abs" style="left:1095px;top:303px;width:288px;height:1px;background:#353535"></div>
<div class="t" style="left:1095px;top:314px;font-size:13px;color:#b0b0b0;font-weight:400;font-family:'Liberation Sans',sans-serif;-webkit-text-stroke:0.5px #b0b0b0;">x-axis title</div>
<div class="abs" style="left:1095px;top:338px;width:288px;height:32px;background:#2c2c2c;border:1px solid #3a3a3a;border-radius:4px"></div>
<div class="t" style="left:1108px;top:346px;font-size:14.7px;color:#eeeeee;font-weight:400;font-family:'Liberation Sans',sans-serif;">Week</div>
<div class="abs" style="left:1095px;top:378px;width:288px;height:1px;background:#353535"></div>
<div class="t" style="left:1095px;top:402px;font-size:15px;color:#f0f0f0;font-weight:400;font-family:'Liberation Sans',sans-serif;">Vertical x-axis Labels</div>
<div class="abs" style="left:1244px;top:401px;width:32px;height:16px;background:#faff69;border-radius:8px"></div>
<div class="abs" style="left:1260.3px;top:403.2px;width:11.5px;height:11.5px;border-radius:50%;background:#1c1c1c"></div>
<div class="abs" style="left:1095px;top:428px;width:288px;height:1px;background:#353535"></div>
<div class="t" style="left:1095px;top:451px;font-size:13px;color:#b0b0b0;font-weight:400;font-family:'Liberation Sans',sans-serif;-webkit-text-stroke:0.5px #b0b0b0;">y-axis title</div>
<div class="abs" style="left:1095px;top:475px;width:288px;height:32px;background:#2c2c2c;border:1px solid #3a3a3a;border-radius:4px"></div>
<div class="t" style="left:1108px;top:483px;font-size:14.7px;color:#eeeeee;font-weight:400;font-family:'Liberation Sans',sans-serif;">Totals</div>
<div class="abs" style="left:1095px;top:515px;width:288px;height:1px;background:#353535"></div>
<div class="t" style="left:1095px;top:539px;font-size:15px;color:#f0f0f0;font-weight:400;font-family:'Liberation Sans',sans-serif;">Show data labels</div>
<div class="abs" style="left:1216px;top:538px;width:32px;height:16px;background:#5a5a5a;border-radius:8px"></div>
<div class="abs" style="left:1219px;top:540px;width:12px;height:12px;border-radius:50%;background:#1c1c1c"></div>
<div class="abs" style="left:1095px;top:565px;width:288px;height:1px;background:#353535"></div>
<div class="t" style="left:1095px;top:588px;font-size:13px;color:#b0b0b0;font-weight:400;font-family:'Liberation Sans',sans-serif;-webkit-text-stroke:0.5px #b0b0b0;">x-axis range (week)</div>
<div class="abs" style="left:1095px;top:612px;width:130px;height:32px;background:#2c2c2c;border:1px solid #3a3a3a;border-radius:4px"></div>
<div class="t" style="left:1108px;top:620px;font-size:14.7px;color:#7a7a7a;font-weight:400;font-family:'Liberation Sans',sans-serif;">min</div>
<div class="t" style="left:1234px;top:621.5px;font-size:13.2px;color:#c4c4c4;font-weight:400;font-family:'Liberation Sans',sans-serif;">to</div>
<div class="abs" style="left:1253px;top:612px;width:130px;height:32px;background:#2c2c2c;border:1px solid #3a3a3a;border-radius:4px"></div>
<div class="t" style="left:1266px;top:620px;font-size:14.7px;color:#7a7a7a;font-weight:400;font-family:'Liberation Sans',sans-serif;">max</div>
<div class="abs" style="left:1095px;top:652px;width:288px;height:1px;background:#353535"></div>
<div class="t" style="left:1095px;top:675px;font-size:13px;color:#b0b0b0;font-weight:400;font-family:'Liberation Sans',sans-serif;-webkit-text-stroke:0.5px #b0b0b0;">y-axis range (trip_total)</div>
<div class="abs" style="left:1095px;top:699px;width:130px;height:32px;background:#2c2c2c;border:1px solid #3a3a3a;border-radius:4px"></div>
<div class="t" style="left:1108px;top:707px;font-size:14.7px;color:#7a7a7a;font-weight:400;font-family:'Liberation Sans',sans-serif;">min</div>
<div class="t" style="left:1234px;top:708.5px;font-size:13.2px;color:#c4c4c4;font-weight:400;font-family:'Liberation Sans',sans-serif;">to</div>
<div class="abs" style="left:1253px;top:699px;width:130px;height:32px;background:#2c2c2c;border:1px solid #3a3a3a;border-radius:4px"></div>
<div class="t" style="left:1266px;top:707px;font-size:14.7px;color:#7a7a7a;font-weight:400;font-family:'Liberation Sans',sans-serif;">max</div>
<div class="t" style="left:1095px;top:733px;font-size:13px;color:#b0b0b0;font-weight:400;font-family:'Liberation Sans',sans-serif;-webkit-text-stroke:0.5px #b0b0b0;">y-axis range (fare_total)</div>
<div class="abs" style="left:1095px;top:757px;width:130px;height:32px;background:#2c2c2c;border:1px solid #3a3a3a;border-radius:4px"></div>
<div class="t" style="left:1108px;top:765px;font-size:14.7px;color:#7a7a7a;font-weight:400;font-family:'Liberation Sans',sans-serif;">min</div>
<div class="t" style="left:1234px;top:766.5px;font-size:13.2px;color:#c4c4c4;font-weight:400;font-family:'Liberation Sans',sans-serif;">to</div>
<div class="abs" style="left:1253px;top:757px;width:130px;height:32px;background:#2c2c2c;border:1px solid #3a3a3a;border-radius:4px"></div>
<div class="t" style="left:1266px;top:765px;font-size:14.7px;color:#7a7a7a;font-weight:400;font-family:'Liberation Sans',sans-serif;">max</div>
<div class="abs" style="left:1095px;top:797px;width:288px;height:1px;background:#353535"></div>
<div class="t" style="left:1095px;top:821px;font-size:15px;color:#f0f0f0;font-weight:400;font-family:'Liberation Sans',sans-serif;">Show legend</div>
<div class="abs" style="left:1189px;top:820px;width:32px;height:16px;background:#faff69;border-radius:8px"></div>
<div class="abs" style="left:1205.3px;top:822.2px;width:11.5px;height:11.5px;border-radius:50%;background:#1c1c1c"></div>
</body></html>
